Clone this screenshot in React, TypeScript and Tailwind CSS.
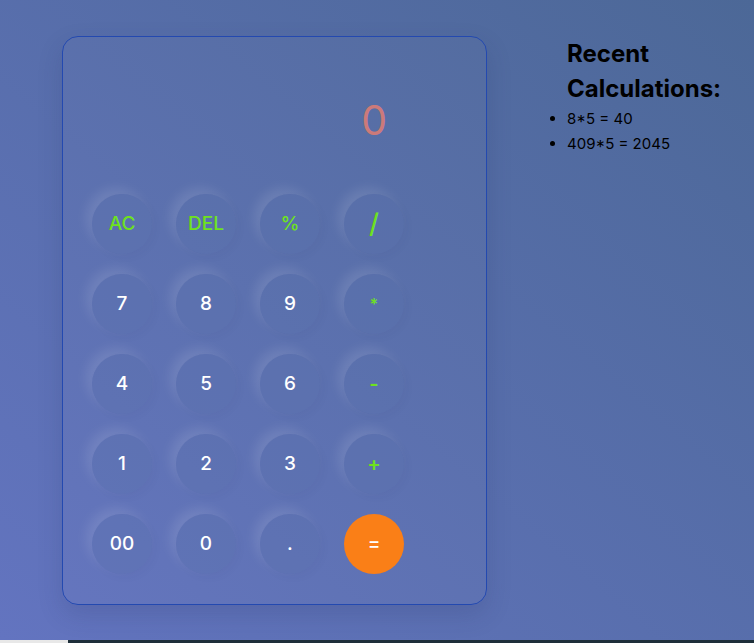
import React from "react";

const keys: { label: string; kind: "op" | "num" | "eq" }[] = [
  { label: "AC", kind: "op" },
  { label: "DEL", kind: "op" },
  { label: "%", kind: "op" },
  { label: "/", kind: "op" },
  { label: "7", kind: "num" },
  { label: "8", kind: "num" },
  { label: "9", kind: "num" },
  { label: "*", kind: "op" },
  { label: "4", kind: "num" },
  { label: "5", kind: "num" },
  { label: "6", kind: "num" },
  { label: "-", kind: "op" },
  { label: "1", kind: "num" },
  { label: "2", kind: "num" },
  { label: "3", kind: "num" },
  { label: "+", kind: "op" },
  { label: "00", kind: "num" },
  { label: "0", kind: "num" },
  { label: ".", kind: "num" },
  { label: "=", kind: "eq" },
];

const history = ["8*5 = 40", "409*5 = 2045"];

function Key({ label, kind }: { label: string; kind: "op" | "num" | "eq" }) {
  const base =
    "w-[60px] h-[60px] rounded-full flex items-center justify-center font-medium";
  if (kind === "eq") {
    return (
      <button className={`${base} bg-[#fa7f17] text-white text-[19px]`}>
        {label}
      </button>
    );
  }
  const color = kind === "op" ? "text-[#6ee21e]" : "text-white";
  const size =
    label === "/"
      ? "text-[27px]"
      : label === "*"
        ? "text-[16px]"
        : label === "-" || label === "+"
          ? "text-[20px] font-semibold"
          : "text-[19px]";
  return (
    <button
      className={`${base} ${color} ${size} bg-[#5a6fad]/30 shadow-[-6px_-6px_12px_rgba(255,255,255,0.11),3px_3px_8px_rgba(40,50,110,0.04)]`}
    >
      {label}
    </button>
  );
}

export default function App() {
  return (
    <div
      className="w-[754px] h-[643px] overflow-hidden flex flex-col"
      style={{ fontFamily: "Inter, 'Noto Sans', sans-serif" }}
    >
      <div className="h-[640px] flex bg-gradient-to-tr from-[#6374c0] to-[#4c6897] pl-[62px] pt-[36px]">
        {/* calculator */}
        <div className="w-[425px] h-[569px] rounded-[16px] border border-[#2349b0] bg-white/[0.02] shadow-[0_10px_25px_rgba(40,50,100,0.18)] flex flex-col">
          <div className="h-[157px] flex items-center justify-end pr-[99px] pt-[10px]">
            <span className="text-[41px] text-[#cc7a7a]">0</span>
          </div>
          <div className="grid grid-cols-[repeat(4,60px)] gap-x-[24px] gap-y-[20px] pl-[29px]">
            {keys.map((k) => (
              <Key key={k.label} label={k.label} kind={k.kind} />
            ))}
          </div>
        </div>

        {/* history */}
        <div className="pl-[80px] w-[267px]">
          <h2 className="text-[24px] font-bold leading-[35px] text-black w-[175px]">
            Recent Calculations:
          </h2>
          <ul className="list-disc text-[15px] leading-[25px] text-black">
            {history.map((h) => (
              <li key={h}>{h}</li>
            ))}
          </ul>
        </div>
      </div>
      <div className="h-[3px] flex">
        <div className="w-[68px] bg-[#e8e8e8]" />
        <div className="flex-1 bg-[#1e2f3a]" />
      </div>
    </div>
  );
}
